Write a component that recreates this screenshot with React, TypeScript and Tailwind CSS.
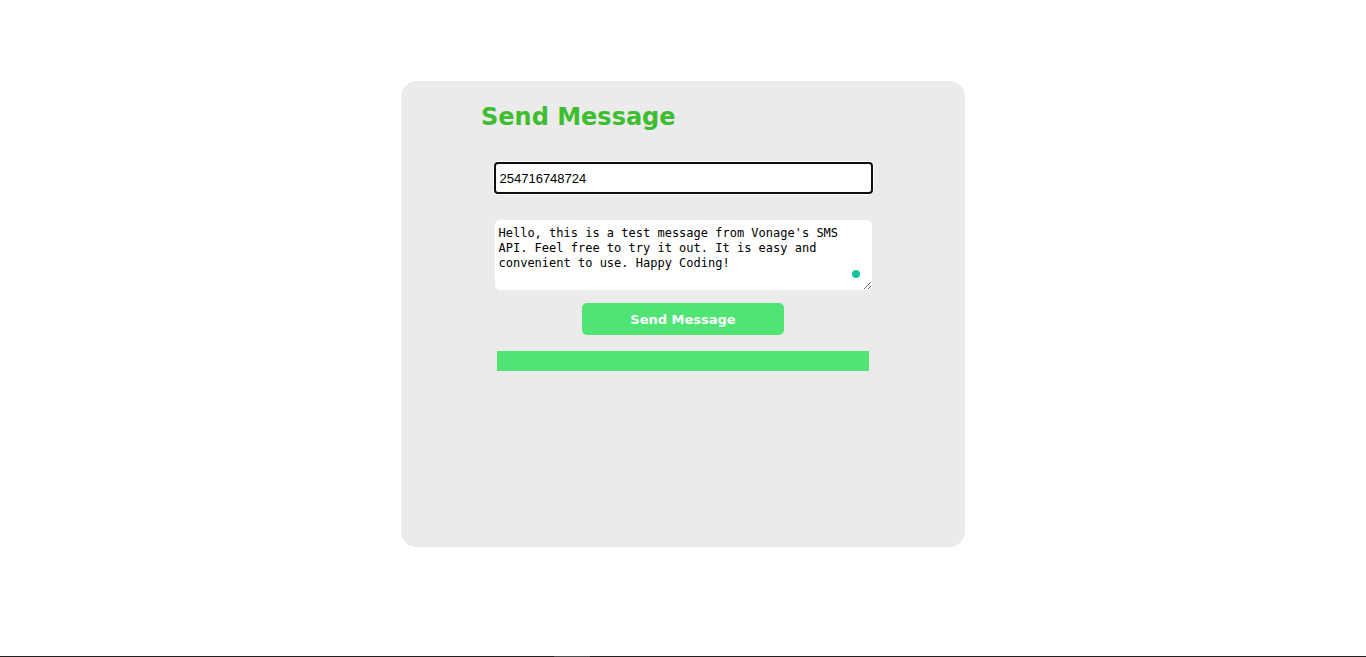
import { useState } from "react";

export default function App() {
  const [phone, setPhone] = useState("254716748724");
  const [message, setMessage] = useState(
    "Hello, this is a test message from Vonage's SMS API. Feel free to try it out. It is easy and convenient to use. Happy Coding!"
  );
  const [status, setStatus] = useState("");

  return (
    <div className="flex min-h-screen flex-col bg-white font-['DejaVu_Sans',sans-serif]">
      <main className="flex grow items-start justify-center pt-[81px] pb-20">
        <form
          className="flex min-h-[466px] w-full max-w-[564px] flex-col items-center rounded-2xl bg-[#ebebeb] px-20 pt-5"
          onSubmit={(event) => {
            event.preventDefault();
            setStatus("Sending…");
          }}
        >
          <h1 className="self-start text-2xl leading-8 font-bold text-[#3dbd2f]">Send Message</h1>
          <input
            type="tel"
            aria-label="Phone number"
            value={phone}
            onChange={(event) => setPhone(event.target.value)}
            className="mt-[29px] h-8 w-full max-w-[379px] rounded border-2 border-[#101010] bg-white px-1 font-['Liberation_Sans',sans-serif] text-[13px] text-black shadow-[0_0_0_1px_#ffffff] outline-none"
          />
          <div className="relative mt-[26px] flex w-full max-w-[377px]">
            <textarea
              aria-label="Message"
              value={message}
              spellCheck={false}
              onChange={(event) => setMessage(event.target.value)}
              className="h-[70px] w-full resize rounded-[5px] bg-white px-1 py-1.5 font-['DejaVu_Sans_Mono',monospace] text-xs leading-[15px] text-black outline-none"
            />
            <span className="pointer-events-none absolute right-3 bottom-3 size-2 rounded-full bg-[#15c39a]" />
          </div>
          <button
            type="submit"
            className="mt-[13px] h-8 w-[202px] rounded-[5px] bg-[#4fe473] pt-0.5 text-[13px] font-bold text-white"
          >
            Send Message
          </button>
          <div role="status" className="mt-4 min-h-5 w-full max-w-[372px] bg-[#4fe473] text-center text-xs leading-5 text-white">
            {status}
          </div>
        </form>
      </main>
      <footer className="flex h-px bg-[#231f20]">
        <div className="ml-[554px] h-px w-9 bg-[#4d4a4b]" />
      </footer>
    </div>
  );
}
